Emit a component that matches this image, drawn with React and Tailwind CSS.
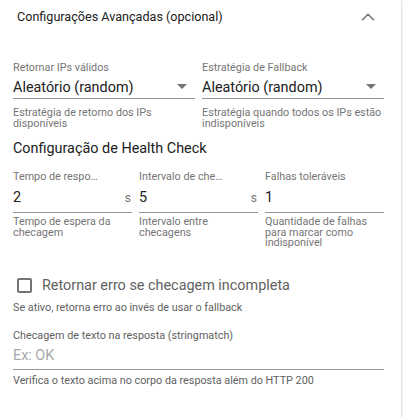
import { ChevronUp } from 'lucide-react';

const font = { fontFamily: 'Roboto, "Noto Sans", sans-serif' };

function SelectField({ label, value, helper }) {
  return (
    <div className="flex flex-col">
      <span className="text-[10.8px] leading-[14px] text-[#757575]">{label}</span>
      <div className="mt-[3px] h-[21px] flex items-center justify-between border-b border-[#949494]">
        <span className="text-[14.4px] leading-[20px] text-[#212121] -mt-[1px]">{value}</span>
        <svg width="10" height="5" viewBox="0 0 10 5" className="mr-[8px] -mt-[3px]">
          <path d="M0 0 L10 0 L5 5 Z" fill="#757575" />
        </svg>
      </div>
      <p className="mt-[9px] text-[10.8px] leading-[10.5px] text-[#757575]">{helper}</p>
    </div>
  );
}

function NumberField({ label, value, unit, helper }) {
  return (
    <div className="flex flex-col">
      <span className="w-[86px] truncate text-[10.8px] leading-[14px] text-[#757575]">{label}</span>
      <div className="mt-[3px] h-[26px] flex items-center justify-between border-b border-[#949494] pb-[4px]">
        <span className="text-[14.4px] leading-[20px] text-[#212121]">{value}</span>
        {unit && <span className="text-[12px] text-[#757575] mr-[1px]">{unit}</span>}
      </div>
      <p className="mt-[4px] text-[10.8px] leading-[10.5px] text-[#757575]">{helper}</p>
    </div>
  );
}

export default function App() {
  return (
    <div className="min-h-screen bg-[#fafafa]" style={font}>
      <div className="w-[401px] bg-white shadow-[0_1px_2px_rgba(0,0,0,0.3)] pb-[29px]">
        {/* Accordion header */}
        <div className="h-[34px] flex items-center justify-between pl-[17px] pr-[22px]">
          <span className="text-[12.6px] text-[#212121]">Configurações Avançadas (opcional)</span>
          <ChevronUp size={22} strokeWidth={1.7} className="text-[#757575]" />
        </div>

        <div className="pl-[13px] pr-[17px] pt-[27px]">
          <div className="grid grid-cols-2 gap-[7px]">
            <SelectField
              label="Retornar IPs válidos"
              value="Aleatório (random)"
              helper="Estratégia de retorno dos IPs disponíveis"
            />
            <SelectField
              label="Estratégia de Fallback"
              value="Aleatório (random)"
              helper="Estratégia quando todos os IPs estão indisponíveis"
            />
          </div>

          <h3 className="mt-[10px] text-[14.4px] leading-[20px] text-[#212121]">Configuração de Health Check</h3>

          <div className="mt-[11px] grid grid-cols-3 gap-[7px]">
            <NumberField label="Tempo de resposta" value="2" unit="s" helper="Tempo de espera da checagem" />
            <NumberField label="Intervalo de checagem" value="5" unit="s" helper="Intervalo entre checagens" />
            <NumberField label="Falhas toleráveis" value="1" helper="Quantidade de falhas para marcar como indisponível" />
          </div>

          {/* Checkbox */}
          <label className="mt-[27px] flex items-center gap-[10px] pl-[4px]">
            <span className="w-[15px] h-[15px] border-2 border-[#757575] rounded-[2px]" />
            <span className="text-[14.4px] leading-[20px] text-[#616161]">Retornar erro se checagem incompleta</span>
          </label>
          <p className="mt-[5px] text-[10.8px] leading-[14px] text-[#616161]">
            Se ativo, retorna erro ao invés de usar o fallback
          </p>

          {/* String match */}
          <div className="mt-[14px] flex flex-col">
            <span className="text-[10.8px] leading-[14px] text-[#616161]">Checagem de texto na resposta (stringmatch)</span>
            <div className="mt-[3px] h-[24px] flex items-center border-b border-[#949494] pb-[3px]">
              <span className="text-[14.4px] leading-[20px] text-[#a8a8a8]">Ex: OK</span>
            </div>
            <p className="mt-[4px] text-[10.8px] leading-[14px] text-[#616161]">
              Verifica o texto acima no corpo da resposta além do HTTP 200
            </p>
          </div>
        </div>
      </div>
    </div>
  );
}
